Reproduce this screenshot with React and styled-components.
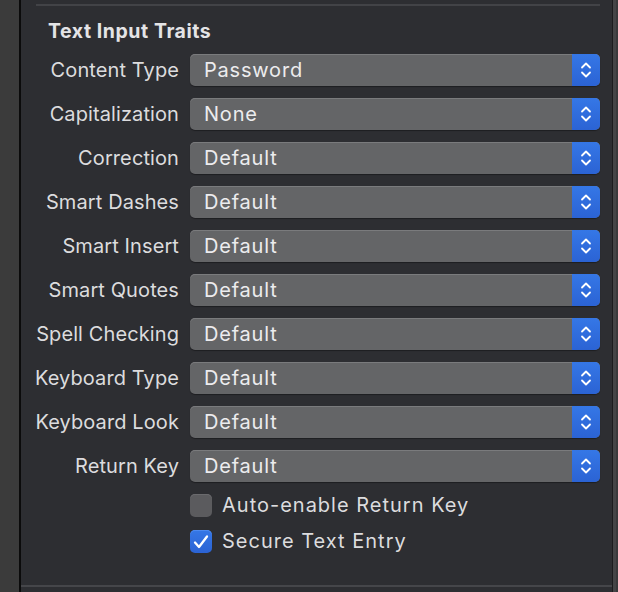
import React from 'react';
import styled, { createGlobalStyle } from 'styled-components';

const GlobalStyle = createGlobalStyle`
    html, body {
        margin: 0;
        padding: 0;
        background: #3a3a3a;
    }
    body {
        font-family: Inter, "Noto Sans", "Liberation Sans", sans-serif;
        -webkit-font-smoothing: antialiased;
    }
`;

// Styled components
const Window = styled.div`
    display: flex;
    height: 592px;
    width: 618px;
    overflow: hidden;
`;

const Gutter = styled.div`
    width: 19px;
    background: #3b3b3b;
    border-right: 2px solid #0b0b0b;
`;

const RightEdge = styled.div`
    width: 5px;
    display: flex;
    background: #454547;
    border-left: 1px solid #1c1c1e;
    box-shadow: inset -2px 0 0 #3a3a3c;
`;

const Panel = styled.div`
    flex: 1;
    background: #2d2e32;
    display: flex;
    flex-direction: column;
`;

const Separator = styled.div`
    height: 2px;
    margin: 4px 12px 0 15px;
    background: #424347;
`;

const Title = styled.h2`
    margin: 0;
    padding: 14px 0 0 27px;
    height: 34px;
    font-size: 19.5px;
    font-weight: 700;
    letter-spacing: 0.55px;
    color: #e4e4e6;
    line-height: 22px;
    box-sizing: border-box;
`;

const Form = styled.div`
    display: grid;
    grid-template-columns: 158px 410px;
    column-gap: 11px;
    row-gap: 12px;
    margin-top: 14px;
`;

const Label = styled.div`
    text-align: right;
    font-size: 20px;
    letter-spacing: 0.1px;
    color: #dcdcde;
    line-height: 32px;
    white-space: nowrap;
`;

const Popup = styled.div`
    display: flex;
    height: 32px;
    border-radius: 5px;
    overflow: hidden;
    background: #646567;
    box-shadow: inset 0 1px 0 #7a7b7d, 0 1px 1px rgba(0, 0, 0, 0.35);
`;

const PopupValue = styled.div`
    flex: 1;
    padding-left: 14px;
    font-size: 20px;
    letter-spacing: 0.8px;
    color: #ececee;
    line-height: 32px;
`;

const Stepper = styled.div`
    width: 28px;
    background: linear-gradient(#3577e6, #2b63d4);
    display: flex;
    align-items: center;
    justify-content: center;
`;

const Checks = styled.div`
    display: flex;
    flex-direction: column;
    gap: 13px;
    padding: 12px 0 0 169px;
`;

const CheckRow = styled.label`
    display: flex;
    align-items: center;
    gap: 10px;
    font-size: 20px;
    letter-spacing: 1px;
    color: #dcdcde;
    line-height: 23px;
`;

const Box = styled.span`
    width: 22px;
    height: 23px;
    border-radius: 5px;
    box-sizing: border-box;
    display: flex;
    align-items: center;
    justify-content: center;
    background: ${p => (p.$checked ? 'linear-gradient(#3577e6, #2b63d4)' : '#5b5b5e')};
    box-shadow: inset 0 1px 0 ${p => (p.$checked ? '#4d8af0' : '#6a6a6d')};
`;

const Footer = styled.div`
    margin-top: auto;
    margin-bottom: 5px;
    height: 2px;
    background: #45464a;
`;

const Chevrons = () => (
    <svg width="12" height="22" viewBox="0 0 12 22" fill="none" stroke="#fff" strokeWidth="1.8" strokeLinecap="round" strokeLinejoin="round">
        <path d="M2 8.5 L6 4.5 L10 8.5" />
        <path d="M2 13.5 L6 17.5 L10 13.5" />
    </svg>
);

const Check = () => (
    <svg width="18" height="18" viewBox="0 0 18 18" fill="none" stroke="#fff" strokeWidth="2.3" strokeLinecap="round" strokeLinejoin="round">
        <path d="M3 9.5 L7 14 L15 3.5" />
    </svg>
);

const fields = [
    ['Content Type', 'Password'],
    ['Capitalization', 'None'],
    ['Correction', 'Default'],
    ['Smart Dashes', 'Default'],
    ['Smart Insert', 'Default'],
    ['Smart Quotes', 'Default'],
    ['Spell Checking', 'Default'],
    ['Keyboard Type', 'Default'],
    ['Keyboard Look', 'Default'],
    ['Return Key', 'Default'],
];

const App = () => {
    return (
        <>
            <GlobalStyle />
            <Window>
                <Gutter />
                <Panel>
                    <Separator />
                    <Title>Text Input Traits</Title>
                    <Form>
                        {fields.map(([label, value]) => (
                            <React.Fragment key={label}>
                                <Label>{label}</Label>
                                <Popup>
                                    <PopupValue>{value}</PopupValue>
                                    <Stepper><Chevrons /></Stepper>
                                </Popup>
                            </React.Fragment>
                        ))}
                    </Form>
                    <Checks>
                        <CheckRow><Box />Auto-enable Return Key</CheckRow>
                        <CheckRow><Box $checked><Check /></Box>Secure Text Entry</CheckRow>
                    </Checks>
                    <Footer />
                </Panel>
                <RightEdge />
            </Window>
        </>
    );
};

export default App;
